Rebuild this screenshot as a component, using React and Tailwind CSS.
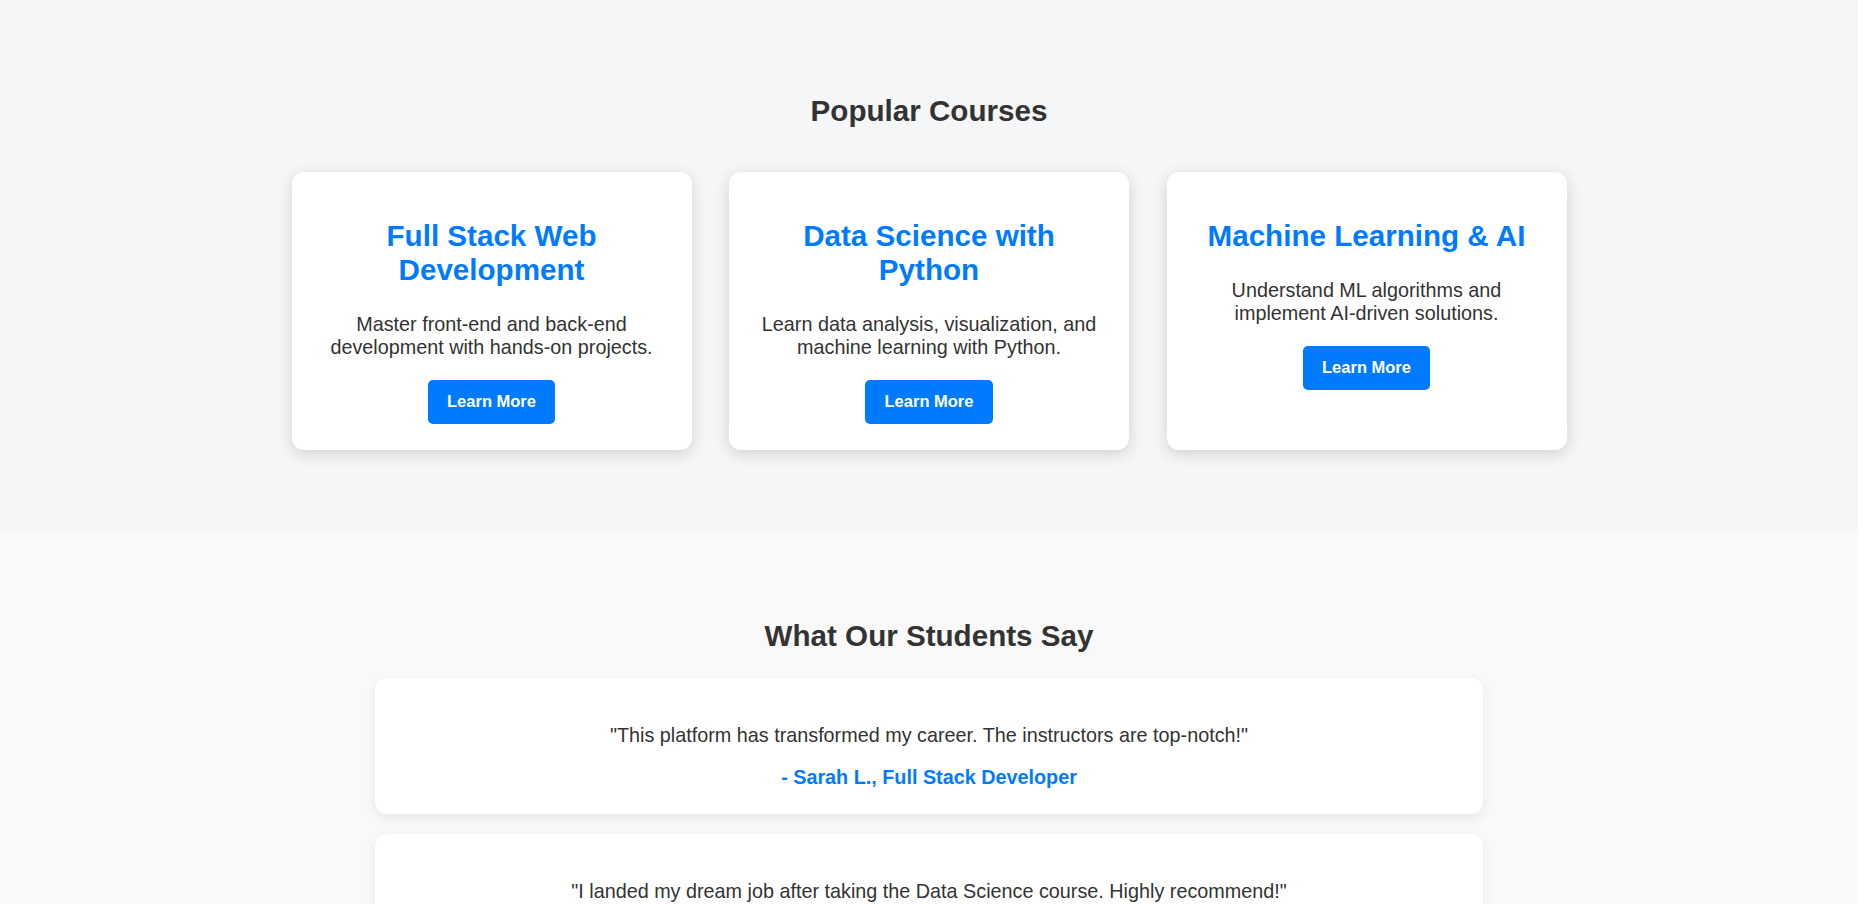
const courses = [
  {
    title: 'Full Stack Web Development',
    text: 'Master front-end and back-end development with hands-on projects.',
  },
  {
    title: 'Data Science with Python',
    text: 'Learn data analysis, visualization, and machine learning with Python.',
  },
  {
    title: 'Machine Learning & AI',
    text: 'Understand ML algorithms and implement AI-driven solutions.',
  },
];

const testimonials = [
  {
    quote: '"This platform has transformed my career. The instructors are top-notch!"',
    author: '- Sarah L., Full Stack Developer',
  },
  {
    quote: '"I landed my dream job after taking the Data Science course. Highly recommend!"',
    author: '- James K., Data Analyst',
  },
];

const CourseCard = ({ title, text }) => (
  <div className="w-[400px] bg-white rounded-[12px] shadow-[0_4px_15px_rgba(0,0,0,0.15)] pt-[47px] pb-[26px] px-[28px] text-center flex flex-col items-center">
    <h3 className="text-[29.6px] leading-[34px] font-bold text-[#007bff]">{title}</h3>
    <p className="mt-[26px] text-[19.8px] leading-[22.75px] text-[#333]">{text}</p>
    <button
      type="button"
      className="mt-[21px] h-[44px] px-[19.5px] rounded-[5px] bg-[#007bff] text-white text-[16.5px] font-bold"
    >
      Learn More
    </button>
  </div>
);

const App = () => {
  return (
    <div className="w-[1858px] min-h-screen bg-[#f9f9f9] font-['Liberation_Sans',Arial,sans-serif]">
      {/* Courses */}
      <section className="bg-[#f5f6f8] pt-[94px] pb-[82px]">
        <h2 className="text-center text-[29.6px] leading-[34px] font-bold text-[#333]">Popular Courses</h2>
        <div className="mt-[44px] flex justify-center items-stretch gap-[37.5px]">
          {courses.map((c) => (
            <CourseCard key={c.title} {...c} />
          ))}
        </div>
      </section>

      {/* Testimonials */}
      <section className="bg-[#f9f9f9] pt-[87px] pb-[60px]">
        <h2 className="text-center text-[29.6px] leading-[34px] font-bold text-[#333]">What Our Students Say</h2>
        <div className="mt-[25px] flex flex-col items-center gap-[20px]">
          {testimonials.map((t) => (
            <div
              key={t.author}
              className="w-[1108px] bg-white rounded-[12px] shadow-[0_4px_12px_rgba(0,0,0,0.08)] pt-[46px] pb-[25px] px-[28px] text-center"
            >
              <p className="text-[19.8px] leading-[22.75px] text-[#333]">{t.quote}</p>
              <p className="mt-[19.5px] text-[19.8px] leading-[22.75px] font-bold text-[#007bff]">{t.author}</p>
            </div>
          ))}
        </div>
      </section>
    </div>
  );
};

export default App;
